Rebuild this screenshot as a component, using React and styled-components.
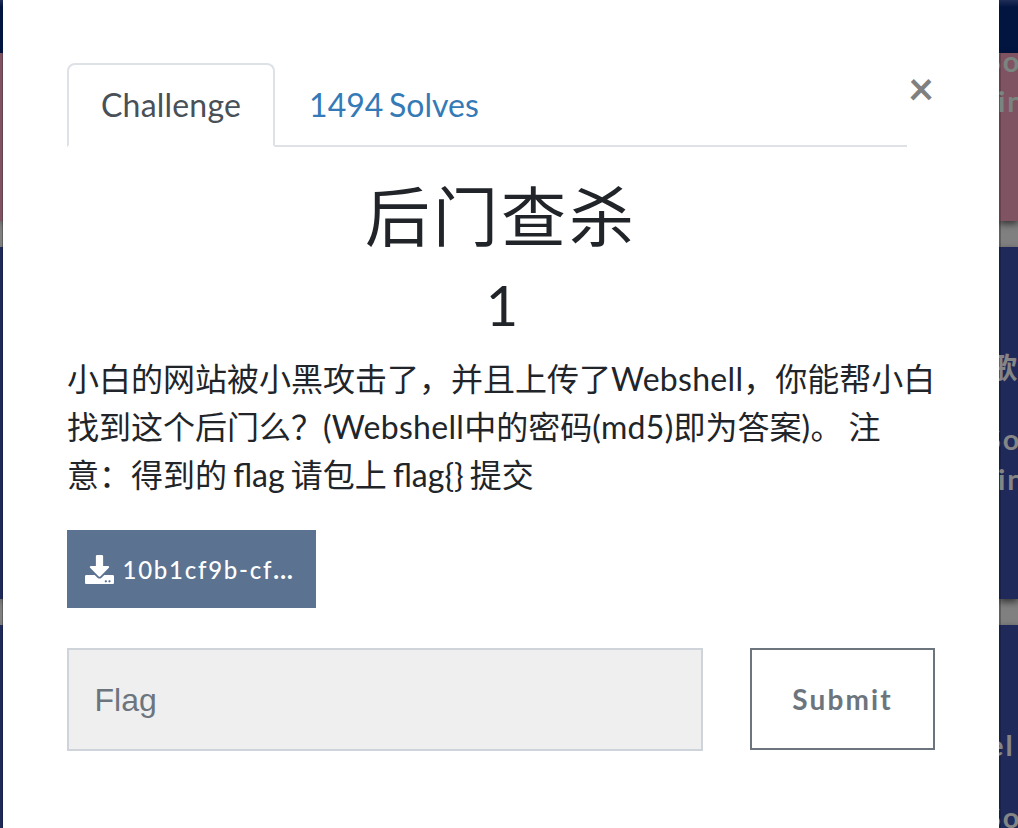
import React from "react";
import styled, { createGlobalStyle } from "styled-components";
import { FaDownload } from "react-icons/fa";

const GlobalStyle = createGlobalStyle`
  *, *::before, *::after { box-sizing: border-box; }
  body {
    margin: 0;
    overflow: hidden;
    background: #808080;
    color: #212529;
    font-family: Lato, "Noto Sans CJK SC", sans-serif;
    font-size: 32px;
    line-height: 48px;
  }
`;

const Page = styled.div`
  display: grid;
  grid-template-columns: 3px 996px 19px;
  height: 828px;
  overflow: hidden;
`;

const Board = styled.div`
  display: flex;
  flex-direction: column;
  overflow: hidden;
  min-width: 0;
  background: #808080;
  box-shadow: inset ${(p) => (p.$side === "left" ? "-1px" : "2px")} 0 0 rgba(0, 0, 0, 0.25);
`;

const Banner = styled.div`
  flex: none;
  height: 53px;
  background: linear-gradient(#1f2e58 0, #021440 7px, #021440 100%);
`;

const Card = styled.div`
  flex: none;
  height: ${(p) => p.$height}px;
  padding-top: ${(p) => p.$top || 0}px;
  margin-bottom: 26px;
  overflow: hidden;
  background: ${(p) => (p.$solved ? "#7f5362" : "#1f2a5b")};
  box-shadow: inset ${(p) => (p.$side === "left" ? "-1px" : "2px")} 0 0 rgba(0, 0, 0, 0.2),
    0 3px 7px rgba(0, 0, 0, 0.6);
`;

const CardLine = styled.div`
  height: 40px;
  margin-top: ${(p) => p.$lift || 0}px;
  margin-left: ${(p) => p.$shift}px;
  margin-bottom: ${(p) => p.$gap || 0}px;
  color: ${(p) => (p.$dim ? "#7b8580" : "#858585")};
  font-size: 29px;
  font-weight: 700;
  line-height: 40px;
  letter-spacing: 2px;
  white-space: nowrap;
`;

const Modal = styled.main`
  display: flex;
  flex-direction: column;
  align-items: flex-start;
  padding: 63px 64px 0;
  background: #fff;
`;

const Header = styled.header`
  display: flex;
  justify-content: space-between;
  align-items: flex-start;
  width: 868px;
  height: 84px;
`;

const Tabs = styled.nav`
  display: flex;
  width: 840px;
  height: 84px;
  border-bottom: 2px solid #dee2e6;
`;

const Tab = styled.a`
  height: 84px;
  padding: 16px 32px;
  border: 2px solid;
  border-color: ${(p) => (p.$active ? "#dee2e6 #dee2e6 #fff" : "transparent")};
  border-radius: 8px 8px 0 0;
  background: ${(p) => (p.$active ? "#fff" : "transparent")};
  color: ${(p) => (p.$active ? "#495057" : "#337ab7")};
  letter-spacing: ${(p) => (p.$active ? "0.2px" : "0")};
  word-spacing: -2.5px;
  white-space: nowrap;
`;

const Close = styled.button`
  flex: none;
  width: 28px;
  height: 48px;
  padding: 0;
  border: 0;
  background: none;
  color: #808080;
  font: 700 45px/50px Lato, sans-serif;
`;

const Title = styled.h2`
  align-self: stretch;
  margin: 31px 0 0;
  font-size: 65px;
  font-weight: 400;
  line-height: 77px;
  letter-spacing: 3px;
  text-align: center;
`;

const Points = styled.h3`
  align-self: stretch;
  margin: 16px 0 0;
  padding-left: 2px;
  font-size: 56px;
  font-weight: 400;
  line-height: 67px;
  text-align: center;
`;

const Description = styled.p`
  margin: 17px 0 0;
  word-spacing: -2px;
  white-space: nowrap;
`;

const Line = styled.span`
  display: block;
  height: 48px;
`;

const Latin = styled.span`
  letter-spacing: 0.3px;
`;

const FileButton = styled.a`
  display: flex;
  align-items: center;
  width: 249px;
  height: 78px;
  margin-top: 31px;
  padding: 0 17.5px;
  background: #5b7290;
  color: #fff;
  font-size: 24px;
  font-weight: 500;
  letter-spacing: 1.75px;
  white-space: nowrap;

  svg {
    flex: none;
    margin-right: 9px;
  }
`;

const FileName = styled.span`
  padding-top: 2px;
`;

const Dots = styled.span`
  font-weight: 900;
  letter-spacing: 1.2px;
`;

const Form = styled.form`
  display: flex;
  justify-content: space-between;
  align-items: flex-start;
  width: 868px;
  margin-top: 40px;
`;

const FlagInput = styled.input`
  width: 636px;
  height: 103px;
  padding: 2px 25.5px 0;
  border: 2px solid #ced4da;
  border-radius: 0;
  outline: 0;
  background: #efefef;
  font: 32px "Liberation Sans", Arial, sans-serif;

  &::placeholder {
    color: #6c757d;
    opacity: 1;
  }
`;

const Submit = styled.button`
  width: 185px;
  height: 102px;
  padding: 0;
  border: 2px solid #6c757d;
  background: #fff;
  color: #6c757d;
  font: 700 28px/42px Lato, sans-serif;
  letter-spacing: 2.1px;
`;

export default function App() {
  return (
    <Page lang="zh-CN">
      <GlobalStyle />
      <Board $side="left">
        <Banner />
        <Card $side="left" $solved $height={168} />
        <Card $side="left" $height={352} />
        <Card $side="left" $height={352} />
      </Board>
      <Modal>
        <Header>
          <Tabs>
            <Tab $active>Challenge</Tab>
            <Tab>1494 Solves</Tab>
          </Tabs>
          <Close type="button" aria-label="Close">×</Close>
        </Header>
        <Title>后门查杀</Title>
        <Points>1</Points>
        <Description>
          <Line>小白的网站被小黑攻击了，并且上传了<Latin>Webshell</Latin>，你能帮小白</Line>
          <Line>找到这个后门么？<Latin>(Webshell</Latin>中的密码<Latin>(md5)</Latin>即为答案<Latin>)</Latin>。 注</Line>
          <Line>意：得到的 flag 请包上 flag&#123;&#125; 提交</Line>
        </Description>
        <FileButton>
          <FaDownload size={29} />
          <FileName>10b1cf9b-cf<Dots>...</Dots></FileName>
        </FileButton>
        <Form>
          <FlagInput placeholder="Flag" />
          <Submit type="button">Submit</Submit>
        </Form>
      </Modal>
      <Board $side="right">
        <Banner />
        <Card $solved $height={168}>
          <CardLine $dim $shift={-14} $lift={-12}>So</CardLine>
          <CardLine $dim $shift={-1}>in</CardLine>
        </Card>
        <Card $height={352} $top={101}>
          <CardLine $shift={-11} $gap={31}>歌</CardLine>
          <CardLine $shift={-14}>So</CardLine>
          <CardLine $shift={-1}>in</CardLine>
        </Card>
        <Card $height={352} $top={100}>
          <CardLine $shift={-11} $gap={32}>el</CardLine>
          <CardLine $shift={-14}>So</CardLine>
        </Card>
      </Board>
    </Page>
  );
}
